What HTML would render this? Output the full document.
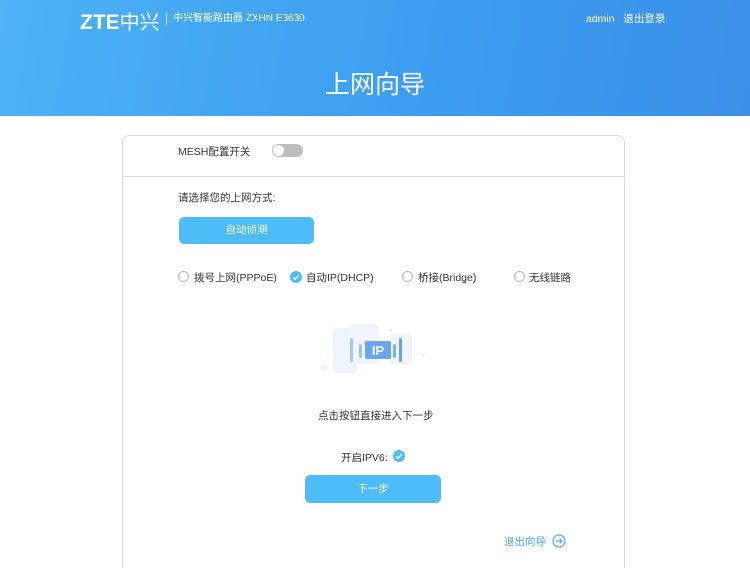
<!DOCTYPE html>
<html><head><meta charset="utf-8"><style>
*{margin:0;padding:0;box-sizing:border-box}
html,body{width:750px;height:568px;overflow:hidden}
body{background:#fff;font-family:"Liberation Sans","Noto Sans CJK SC",sans-serif;color:#333;font-size:10.5px;position:relative}
.hdr{position:absolute;left:0;top:0;width:750px;height:116px;background:linear-gradient(100deg,#4cb3f5 0%,#3a9cf0 60%,#3c8fe8 100%)}
.logo{position:absolute;left:80px;top:6px;color:#fff;font-size:21px;font-weight:bold}
.sub{position:absolute;left:166px;top:12px;color:#fff;font-size:10px;border-left:1px solid #cfe6fb;padding-left:6px;line-height:14px}
.usr{position:absolute;left:586px;top:11px;color:#fff;font-size:10.5px}
.title{position:absolute;left:0;width:750px;top:65px;text-align:center;color:#fff;font-size:25px}
.card{position:absolute;left:122px;top:135px;width:503px;height:460px;border:1px solid #d9d9d9;border-radius:8px}
.line{position:absolute;left:122px;top:176px;width:503px;height:1px;background:#ddd}
.t{position:absolute;white-space:nowrap}
.tog{position:absolute;left:272px;top:144px;width:31px;height:13px;border-radius:7px;background:#bdbdbd}
.tog:after{content:"";position:absolute;left:1px;top:1px;width:11px;height:11px;border-radius:50%;background:#fff}
.btn{position:absolute;background:#4dbcf8;color:#fff;border-radius:5px;text-align:center}
.rad{position:absolute;width:11px;height:11px;border:1px solid #bbb;border-radius:50%;top:271px}
</style></head><body>
<div class="hdr"></div>
<div class="logo">ZTE<span style="font-weight:normal;font-size:20px">中兴</span></div>
<div class="sub">中兴智能路由器 ZXHN E3630</div>
<div class="usr">admin &nbsp;&nbsp;退出登录</div>
<div class="title">上网向导</div>
<div class="card"></div>
<div class="line"></div>
<div class="t" style="left:178px;top:144px">MESH配置开关</div>
<div class="tog"></div>
<div class="t" style="left:178px;top:190px">请选择您的上网方式:</div>
<div class="btn" style="left:179px;top:217px;width:135px;height:27px;line-height:27px">自动侦测</div>
<div class="rad" style="left:178px"></div>
<div class="t" style="left:194px;top:270px">拨号上网(PPPoE)</div>
<svg style="position:absolute;left:290px;top:271px" width="12" height="12"><circle cx="6" cy="6" r="6" fill="#4dbcf8"/><path d="M3 6.2l2 2 4-4" stroke="#fff" stroke-width="1.4" fill="none"/></svg>
<div class="t" style="left:306px;top:270px">自动IP(DHCP)</div>
<div class="rad" style="left:402px"></div>
<div class="t" style="left:418px;top:270px">桥接(Bridge)</div>
<div class="rad" style="left:514px"></div>
<div class="t" style="left:529px;top:270px">无线链路</div>
<svg style="position:absolute;left:315px;top:320px" width="120" height="60">
<rect x="18" y="8" width="24" height="45" rx="4" fill="#eef4fc"/>
<rect x="34" y="4" width="30" height="40" rx="5" fill="#f0f5fd"/>
<rect x="75" y="14" width="22" height="30" rx="4" fill="#f1f6fd"/>
<circle cx="9" cy="48" r="3" fill="#e8f0fb"/><circle cx="108" cy="35" r="2" fill="#e8f0fb"/><circle cx="76" cy="10" r="1.5" fill="#e0ebfa"/>
<rect x="35" y="18" width="3" height="24" rx="1.5" fill="#a8c6f0"/>
<rect x="44" y="24" width="3" height="14" rx="1.5" fill="#9fc0ef"/>
<rect x="50" y="21" width="26" height="18" rx="2" fill="#6aa6f0"/>
<text x="63" y="35" font-size="13" font-family="Liberation Sans" fill="#fff" text-anchor="middle" font-weight="bold">IP</text>
<rect x="78" y="24" width="3" height="14" rx="1.5" fill="#7fb0f0"/>
<rect x="84" y="18" width="3" height="24" rx="1.5" fill="#6aa0ec"/>
</svg>
<div class="t" style="left:318px;top:408px">点击按钮直接进入下一步</div>
<div class="t" style="left:341px;top:450px">开启IPV6:</div>
<svg style="position:absolute;left:393px;top:450px" width="12" height="12"><circle cx="6" cy="6" r="6" fill="#4dbcf8"/><path d="M3 6.2l2 2 4-4" stroke="#fff" stroke-width="1.4" fill="none"/></svg>
<div class="btn" style="left:305px;top:475px;width:136px;height:28px;line-height:28px">下一步</div>
<div class="t" style="left:504px;top:534px;color:#4dabe8">退出向导</div>
<svg style="position:absolute;left:552px;top:534px" width="14" height="14"><circle cx="7" cy="7" r="6" stroke="#4dabe8" stroke-width="1.2" fill="none"/><path d="M3.8 7h6M7.5 4.5L10 7l-2.5 2.5" stroke="#4dabe8" stroke-width="1.2" fill="none"/></svg>
</body></html>
